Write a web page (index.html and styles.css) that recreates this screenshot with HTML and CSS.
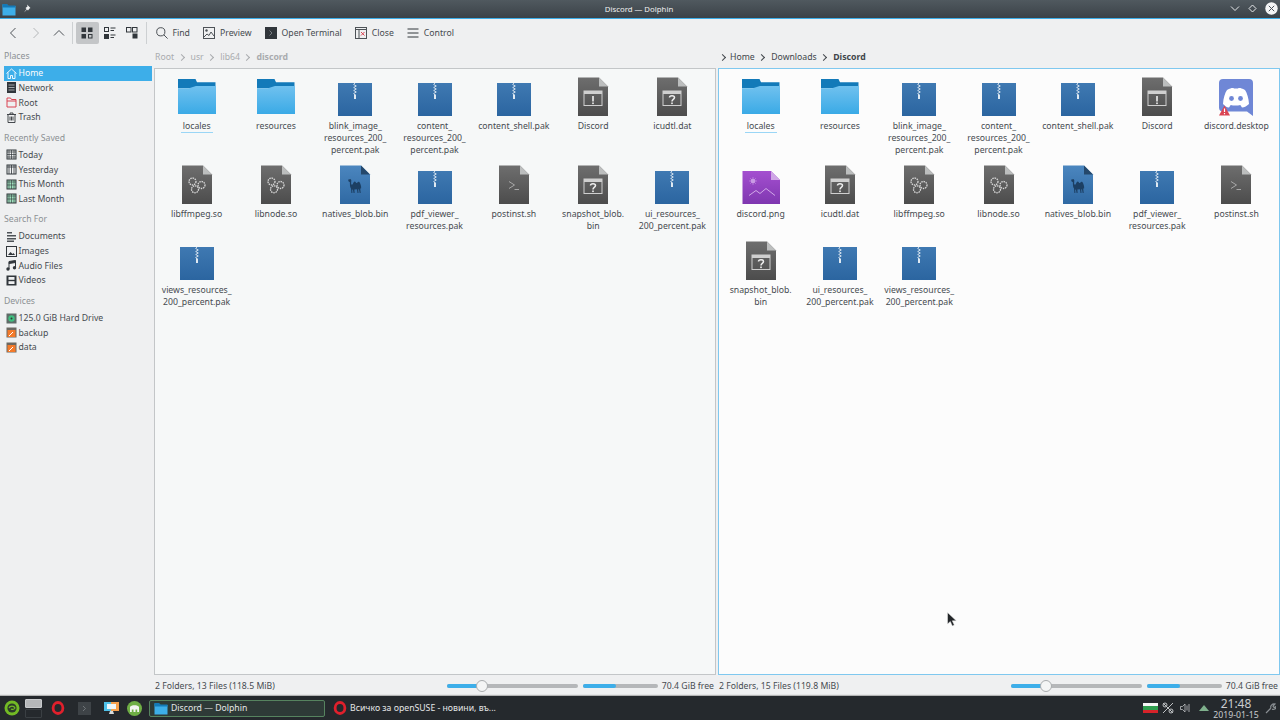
FILE: index.html
```html
<!DOCTYPE html>
<html lang="en">
<head>
    <meta charset="UTF-8">
    <meta name="viewport" content="width=device-width, initial-scale=1.0">
    <title>Discord — Dolphin</title>
    <link rel="stylesheet" href="styles.css">
</head>
<body>
    <!-- shared icons -->
    <svg class="defs" width="0" height="0">
        <defs>
            <linearGradient id="gFolder" x1="0" y1="0" x2="0" y2="1"><stop offset="0" stop-color="#70c1ef"/><stop offset="1" stop-color="#3aaae6"/></linearGradient>
            <linearGradient id="gZip" x1="0" y1="0" x2="0" y2="1"><stop offset="0" stop-color="#3f79b2"/><stop offset="1" stop-color="#2b65a0"/></linearGradient>
            <linearGradient id="gFile" x1="0" y1="0" x2="0" y2="1"><stop offset="0" stop-color="#6e6e6e"/><stop offset="1" stop-color="#4c4c4c"/></linearGradient>
            <linearGradient id="gBlue" x1="0" y1="0" x2="0" y2="1"><stop offset="0" stop-color="#4b86bf"/><stop offset="1" stop-color="#2f69a3"/></linearGradient>
            <linearGradient id="gPurple" x1="0" y1="0" x2="0" y2="1"><stop offset="0" stop-color="#a44fd0"/><stop offset="1" stop-color="#7f37b0"/></linearGradient>

            <symbol id="folder" viewBox="0 0 40 40">
                <path d="M1 2h17.500l1.500 3.300h18.500v6H1z" fill="#137ab9"/>
                <path d="M1 11.300h11l7-2.300h20v28H1z" fill="url(#gFolder)"/>
            </symbol>
            <symbol id="zip" viewBox="0 0 40 40">
                <rect x="3" y="6" width="34" height="33" fill="url(#gZip)"/>
                <path d="M20 6l-1.300 1.500 2.600 1.500-2.600 1.500 2.600 1.500-2.600 1.500 2.600 1.500-2.600 1.500 1.300 1.500" fill="none" stroke="#dfe9f2" stroke-width=".9"/>
                <rect x="19" y="17.500" width="2" height="4.500" fill="#dfe9f2"/>
            </symbol>
            <symbol id="filebase" viewBox="0 0 40 40">
                <path d="M5 .5h21l9 9v29.500H5z" fill="url(#gFile)"/>
                <path d="M26 .5l9 9h-9z" fill="#bcbebe"/>
            </symbol>
            <symbol id="file-warn" viewBox="0 0 40 40">
                <use href="#filebase"/>
                <rect x="11" y="14" width="18" height="14.500" fill="none" stroke="#cfcfcf" stroke-width="1"/>
                <rect x="11" y="14" width="18" height="3" fill="#cfcfcf"/>
                <rect x="19.200" y="19" width="1.600" height="5.500" fill="#eee"/>
                <rect x="19.200" y="25.500" width="1.600" height="1.600" fill="#eee"/>
            </symbol>
            <symbol id="file-q" viewBox="0 0 40 40">
                <use href="#filebase"/>
                <rect x="11" y="14" width="18" height="14.500" fill="none" stroke="#cfcfcf" stroke-width="1"/>
                <rect x="11" y="14" width="18" height="3" fill="#cfcfcf"/>
                <path d="M17.500 20.500c0-2.500 5-2.500 5 0 0 2-2.500 1.800-2.500 4" fill="none" stroke="#eee" stroke-width="1.500"/>
                <rect x="19.200" y="25.500" width="1.600" height="1.600" fill="#eee"/>
            </symbol>
            <symbol id="file-gears" viewBox="0 0 40 40">
                <use href="#filebase"/>
                <g fill="none" stroke="#d8d8d8" stroke-width="1.300" stroke-dasharray="1.500 .8">
                    <circle cx="15.500" cy="16.500" r="3.500"/>
                    <circle cx="24.500" cy="20" r="3.500"/>
                    <circle cx="18" cy="24.300" r="3.500"/>
                </g>
            </symbol>
            <symbol id="file-term" viewBox="0 0 40 40">
                <use href="#filebase"/>
                <path d="M15 16.500l5.500 3.500-5.500 3.500M20.500 24.500h4.500" fill="none" stroke="#a8a8a8" stroke-width="1"/>
            </symbol>
            <symbol id="file-camel" viewBox="0 0 40 40">
                <path d="M5 .5h21l9 9v29.500H5z" fill="url(#gBlue)"/>
                <path d="M26 .5l9 9h-9z" fill="#25486b"/>
                <path d="M13 14.800l2.500-.8.800 1.200-.2 3.500c.3 1.200 1.200 1.300 1.800.2.700-2.300 2-3.200 3-1.500.5.800 1 .8 1.500 0 .8-1.200 2.300-.8 2.800 1 .8 2 1.200 3.500.8 5.500l-.3-1.200-.4 1.500.4 3.800h-1l-.8-4-.7.800.3 3.200h-1l-.6-3.800-2.500.3.200 3.500h-1l-.7-3.500-.7.200.2 3.300h-1l-.4-4.500c-1.200-1.500-1-4-1.200-6.500l-1-.3z" fill="#1c3f63"/>
            </symbol>
            <symbol id="file-image" viewBox="0 0 40 40">
                <path d="M1.500 6h28.500l9 9v24H1.500z" fill="url(#gPurple)"/>
                <path d="M30 6l9 9h-9z" fill="#cfa6e6"/>
                <circle cx="12" cy="16" r="2.300" fill="#c99ae4"/>
                <path d="M12 12v8M8 16h8M9.200 13.200l5.600 5.600M14.800 13.200l-5.600 5.600" stroke="#c99ae4" stroke-width=".6"/>
                <path d="M8 30.500l7-5 4 3 6-5 9 7" fill="none" stroke="#d8b4ec" stroke-width=".9"/>
            </symbol>
            <symbol id="discord" viewBox="0 0 40 40">
                <path d="M3 6a4 4 0 0 1 4-4h26a4 4 0 0 1 4 4v33l-6-4.500H7a4 4 0 0 1-4-4z" fill="#6f87d6"/>
                <path d="M7 27c.3-6 2-11 4-14 4-2 6-2.300 7-1.500h4c1-.8 3-.5 7 1.500 2 3 3.700 8 4 14-2 2-4.500 3.300-7 3.500l-1.700-2.500c-2.700.8-6.900.8-9.600 0L13 30.500c-2.500-.2-4-1.500-6-3.500z" fill="#fff"/>
                <circle cx="15.500" cy="21.500" r="2.400" fill="#6f87d6"/>
                <circle cx="24.500" cy="21.500" r="2.400" fill="#6f87d6"/>
                <path d="M3 38.500l5.500-10 5.500 10z" fill="#da4453"/>
                <path d="M8.500 31.500v3.500M8.500 36v1.300" stroke="#fff" stroke-width="1.200"/>
            </symbol>

            <symbol id="opera" viewBox="0 0 14 14">
                <ellipse cx="7" cy="7" rx="4.900" ry="5.500" fill="none" stroke="#e0202c" stroke-width="2.800"/>
            </symbol>
            <symbol id="doc-folder" viewBox="0 0 14 14">
                <path d="M.5 2.500h4.500l1.500 1.500h7v9.500H.5z" fill="#3daee9"/>
                <path d="M.5 2h4.500l1.500 1.500h7v2h-13z" fill="#147ab8"/>
            </symbol>
        </defs>
    </svg>

    <header class="titlebar">
        <div class="title-left">
            <svg class="ti-folder" width="14" height="14"><use href="#doc-folder"/></svg>
            <svg width="9" height="9" viewBox="0 0 9 9"><path d="M5 .5l3.500 3.500-1 .5-1.500 2-1-1-3 3 2.500-3.500-1-1 2-1.500z" fill="#f2f3f4"/></svg>
        </div>
        <div class="title-text">Discord — Dolphin</div>
        <div class="title-right">
            <svg width="10" height="6" viewBox="0 0 10 6"><path d="M1 .5l4 4 4-4" fill="none" stroke="#e8eaec" stroke-width="1"/></svg>
            <svg width="9" height="9" viewBox="0 0 9 9"><path d="M4.500 1l3.500 3.500-3.500 3.500-3.500-3.500z" fill="none" stroke="#e8eaec" stroke-width="1"/></svg>
            <svg width="13" height="13" viewBox="0 0 13 13"><circle cx="6.500" cy="6.500" r="6.200" fill="#f4f5f6"/><path d="M3.800 3.800l5.400 5.400M9.200 3.800l-5.400 5.400" stroke="#4a5158" stroke-width="1"/></svg>
        </div>
    </header>

    <nav class="toolbar">
        <div class="tool-group nav-group">
            <button class="nav-btn"><svg width="10" height="12" viewBox="0 0 10 12"><path d="M7.500 1l-5 5 5 5" fill="none" stroke="#4d5257" stroke-width="1"/></svg></button>
            <button class="nav-btn"><svg width="10" height="12" viewBox="0 0 10 12"><path d="M2.500 1l5 5-5 5" fill="none" stroke="#b4b7b9" stroke-width="1"/></svg></button>
            <button class="nav-btn"><svg width="12" height="10" viewBox="0 0 12 10"><path d="M1 7.500l5-5 5 5" fill="none" stroke="#4d5257" stroke-width="1"/></svg></button>
        </div>
        <div class="tool-sep"></div>
        <div class="tool-group view-group">
            <button class="view-btn active"><svg width="12" height="12" viewBox="0 0 12 12"><path d="M.5.500h4.500v4.500h-4.500zM7 .5h4.500v4.500h-4.500zM.5 7h4.500v4.500h-4.500z" fill="#31363b"/><rect x="7.500" y="7.500" width="3.500" height="3.500" fill="none" stroke="#31363b"/></svg></button>
            <button class="view-btn"><svg width="12" height="12" viewBox="0 0 12 12"><rect x=".5" y=".5" width="4" height="4" fill="none" stroke="#31363b"/><rect y="7" width="5" height="5" fill="#31363b"/><path d="M6.500 1h5M6.500 3.500h3.500M6.500 8h5M6.500 10.500h3.500" stroke="#31363b"/></svg></button>
            <button class="view-btn"><svg width="12" height="12" viewBox="0 0 12 12"><rect x=".5" y=".5" width="4.500" height="4.500" fill="none" stroke="#31363b"/><rect x="6.500" y=".5" width="4.500" height="4.500" fill="none" stroke="#31363b"/><rect x="6.500" y="6.500" width="5" height="5" fill="#31363b"/></svg></button>
        </div>
        <div class="tool-sep"></div>
        <div class="tool-group action-group">
            <div class="action"><svg width="12" height="12" viewBox="0 0 12 12"><circle cx="4.800" cy="4.800" r="4.100" fill="none" stroke="#4d5257"/><path d="M7.800 7.800l3.800 3.800" stroke="#4d5257"/></svg>Find</div>
            <div class="action"><svg width="12" height="12" viewBox="0 0 12 12"><rect x=".5" y=".5" width="11" height="11" fill="none" stroke="#4d5257"/><circle cx="3.500" cy="3.500" r="1.200" fill="#4d5257"/><path d="M1 10l3-3 2 1.500 2-3.500 3 4" fill="none" stroke="#4d5257"/></svg>Preview</div>
            <div class="action"><svg width="12" height="12" viewBox="0 0 12 12"><rect width="12" height="12" fill="#31363b"/><path d="M4.500 3.500l2.500 2.500-2.500 2.500" fill="none" stroke="#8c9196" stroke-width=".8"/></svg>Open Terminal</div>
            <div class="action"><svg width="12" height="12" viewBox="0 0 12 12"><rect x=".5" y=".5" width="11" height="11" fill="none" stroke="#4d5257"/><path d="M.5 2.500h11M4 2.500v9" stroke="#4d5257"/><path d="M6 5l3.500 3.500M9.500 5L6 8.500" stroke="#da4453"/></svg>Close</div>
            <div class="action"><svg width="12" height="12" viewBox="0 0 12 12"><path d="M.5 2h11M.5 6h11M.5 10h11" stroke="#31363b" stroke-width="1"/></svg>Control</div>
        </div>
    </nav>

    <main class="main">
        <aside class="sidebar">
            <section class="side-section">
                <h4>Places</h4>
                <div class="side-item selected"><svg width="11" height="11" viewBox="0 0 11 11"><path d="M.5 5.500l5-4.500 5 4.500M2 4.500v6h2.500v-3h2v3h2.500v-6" fill="none" stroke="#fff" stroke-width=".9"/></svg>Home</div>
                <div class="side-item"><svg width="11" height="11" viewBox="0 0 11 11"><rect x="1" y="0" width="9" height="11" fill="#31363b"/><path d="M2.500 3h6M2.500 5.500h6M2.500 8h6" stroke="#bfc2c4" stroke-width=".8"/></svg>Network</div>
                <div class="side-item"><svg width="11" height="11" viewBox="0 0 11 11"><path d="M1 1h3.500l1 1.500h4.500v7.500h-9z" fill="none" stroke="#da4453"/><path d="M1 4h9" stroke="#da4453"/></svg>Root</div>
                <div class="side-item"><svg width="11" height="11" viewBox="0 0 11 11"><path d="M1 2.500h9M4 2.500v-1.500h3v1.500M2 2.500v8h7v-8M4 4.500v4M5.500 4.500v4M7 4.500v4" fill="none" stroke="#31363b" stroke-width=".9"/></svg>Trash</div>
            </section>
            <section class="side-section">
                <h4>Recently Saved</h4>
                <div class="side-item"><svg width="11" height="11" viewBox="0 0 11 11"><rect x="1" y="1" width="9" height="9" fill="none" stroke="#31363b"/><path d="M1 3h9M3 1v9M5.500 1v9M8 1v9M1 5.500h9M1 8h9" stroke="#31363b" stroke-width=".7"/></svg>Today</div>
                <div class="side-item"><svg width="11" height="11" viewBox="0 0 11 11"><rect x="1" y="1" width="9" height="9" fill="none" stroke="#31363b"/><path d="M1 3h9M3 1v9M5.500 1v9M8 1v9" stroke="#31363b" stroke-width=".8"/></svg>Yesterday</div>
                <div class="side-item"><svg width="11" height="11" viewBox="0 0 11 11"><rect x="1" y="1" width="9" height="9" fill="#9fe0bd" stroke="#31363b"/><path d="M1 3h9M3 1v9M5.500 1v9M8 1v9M1 6h9" stroke="#31363b" stroke-width=".6"/></svg>This Month</div>
                <div class="side-item"><svg width="11" height="11" viewBox="0 0 11 11"><rect x="1" y="1" width="9" height="9" fill="#9fe0bd" stroke="#31363b"/><path d="M1 3h9M3 1v9M5.500 1v9M8 1v9M1 6h9" stroke="#31363b" stroke-width=".6"/></svg>Last Month</div>
            </section>
            <section class="side-section">
                <h4>Search For</h4>
                <div class="side-item"><svg width="11" height="11" viewBox="0 0 11 11"><path d="M1 1h5v1.500H1zM1 4h9v1.500H1zM1 7h9v1.500H1zM1 9.500h7V11H1z" fill="#4d5257"/></svg>Documents</div>
                <div class="side-item"><svg width="11" height="11" viewBox="0 0 11 11"><rect x=".5" y=".5" width="10" height="10" fill="none" stroke="#31363b"/><path d="M2 9l2.500-3 2 2 1-1 1.500 2z" fill="#31363b"/></svg>Images</div>
                <div class="side-item"><svg width="11" height="11" viewBox="0 0 11 11"><path d="M3 2.500v6.500M9.500 1v6.500M3 1.500l6.500-1v2l-6.500 1z" fill="#31363b" stroke="#31363b"/><circle cx="2" cy="9" r="1.700" fill="#31363b"/><circle cx="8.500" cy="7.800" r="1.700" fill="#31363b"/></svg>Audio Files</div>
                <div class="side-item"><svg width="11" height="11" viewBox="0 0 11 11"><rect x=".5" y=".5" width="10" height="10" fill="#31363b"/><rect x="2.500" y="2" width="6" height="2.800" fill="#eff0f1"/><rect x="2.500" y="6.200" width="6" height="2.800" fill="#eff0f1"/></svg>Videos</div>
            </section>
            <section class="side-section">
                <h4>Devices</h4>
                <div class="side-item"><svg width="11" height="11" viewBox="0 0 11 11"><rect x=".5" y=".5" width="10" height="10" fill="#5f6b68"/><circle cx="5.500" cy="5.500" r="3.200" fill="#3fbf7f"/><circle cx="5.500" cy="5.500" r="1" fill="#2c3a36"/></svg>125.0 GiB Hard Drive</div>
                <div class="side-item"><svg width="11" height="11" viewBox="0 0 11 11"><rect x=".5" y=".5" width="10" height="10" fill="#6c6862"/><rect x="1.500" y="3" width="8" height="7" fill="#f47a2a"/><path d="M3 9l4-4" stroke="#fff"/></svg>backup</div>
                <div class="side-item"><svg width="11" height="11" viewBox="0 0 11 11"><rect x=".5" y=".5" width="10" height="10" fill="#6c6862"/><rect x="1.500" y="3" width="8" height="7" fill="#f47a2a"/><path d="M3 9l4-4" stroke="#fff"/></svg>data</div>
            </section>
        </aside>

        <section class="pane inactive">
            <div class="crumbs">
                <span>Root</span><i class="crumb-arrow"></i><span>usr</span><i class="crumb-arrow"></i><span>lib64</span><i class="crumb-arrow"></i><b>discord</b>
            </div>
            <div class="files">
                <div class="file"><svg class="file-icon"><use href="#folder"/></svg><div class="file-name"><span class="hover-line">locales</span></div></div>
                <div class="file"><svg class="file-icon"><use href="#folder"/></svg><div class="file-name">resources</div></div>
                <div class="file"><svg class="file-icon"><use href="#zip"/></svg><div class="file-name">blink_image_<br>resources_200_<br>percent.pak</div></div>
                <div class="file"><svg class="file-icon"><use href="#zip"/></svg><div class="file-name">content_<br>resources_200_<br>percent.pak</div></div>
                <div class="file"><svg class="file-icon"><use href="#zip"/></svg><div class="file-name">content_shell.pak</div></div>
                <div class="file"><svg class="file-icon"><use href="#file-warn"/></svg><div class="file-name">Discord</div></div>
                <div class="file"><svg class="file-icon"><use href="#file-q"/></svg><div class="file-name">icudtl.dat</div></div>
                <div class="file"><svg class="file-icon"><use href="#file-gears"/></svg><div class="file-name">libffmpeg.so</div></div>
                <div class="file"><svg class="file-icon"><use href="#file-gears"/></svg><div class="file-name">libnode.so</div></div>
                <div class="file"><svg class="file-icon"><use href="#file-camel"/></svg><div class="file-name">natives_blob.bin</div></div>
                <div class="file"><svg class="file-icon"><use href="#zip"/></svg><div class="file-name">pdf_viewer_<br>resources.pak</div></div>
                <div class="file"><svg class="file-icon"><use href="#file-term"/></svg><div class="file-name">postinst.sh</div></div>
                <div class="file"><svg class="file-icon"><use href="#file-q"/></svg><div class="file-name">snapshot_blob.<br>bin</div></div>
                <div class="file"><svg class="file-icon"><use href="#zip"/></svg><div class="file-name">ui_resources_<br>200_percent.pak</div></div>
                <div class="file"><svg class="file-icon"><use href="#zip"/></svg><div class="file-name">views_resources_<br>200_percent.pak</div></div>
            </div>
            <div class="status">
                <span>2 Folders, 13 Files (118.5 MiB)</span>
                <div class="status-right">
                    <div class="zoom-slider"><div class="slider-fill"></div><div class="slider-handle"></div></div>
                    <div class="capacity"><div class="capacity-fill"></div></div>
                    <span>70.4 GiB free</span>
                </div>
            </div>
        </section>

        <section class="pane">
            <div class="crumbs right-crumbs">
                <i class="crumb-arrow first"></i><span>Home</span><i class="crumb-arrow"></i><span>Downloads</span><i class="crumb-arrow"></i><b>Discord</b>
            </div>
            <div class="files">
                <div class="file"><svg class="file-icon"><use href="#folder"/></svg><div class="file-name"><span class="hover-line">locales</span></div></div>
                <div class="file"><svg class="file-icon"><use href="#folder"/></svg><div class="file-name">resources</div></div>
                <div class="file"><svg class="file-icon"><use href="#zip"/></svg><div class="file-name">blink_image_<br>resources_200_<br>percent.pak</div></div>
                <div class="file"><svg class="file-icon"><use href="#zip"/></svg><div class="file-name">content_<br>resources_200_<br>percent.pak</div></div>
                <div class="file"><svg class="file-icon"><use href="#zip"/></svg><div class="file-name">content_shell.pak</div></div>
                <div class="file"><svg class="file-icon"><use href="#file-warn"/></svg><div class="file-name">Discord</div></div>
                <div class="file"><svg class="file-icon"><use href="#discord"/></svg><div class="file-name">discord.desktop</div></div>
                <div class="file"><svg class="file-icon"><use href="#file-image"/></svg><div class="file-name">discord.png</div></div>
                <div class="file"><svg class="file-icon"><use href="#file-q"/></svg><div class="file-name">icudtl.dat</div></div>
                <div class="file"><svg class="file-icon"><use href="#file-gears"/></svg><div class="file-name">libffmpeg.so</div></div>
                <div class="file"><svg class="file-icon"><use href="#file-gears"/></svg><div class="file-name">libnode.so</div></div>
                <div class="file"><svg class="file-icon"><use href="#file-camel"/></svg><div class="file-name">natives_blob.bin</div></div>
                <div class="file"><svg class="file-icon"><use href="#zip"/></svg><div class="file-name">pdf_viewer_<br>resources.pak</div></div>
                <div class="file"><svg class="file-icon"><use href="#file-term"/></svg><div class="file-name">postinst.sh</div></div>
                <div class="file"><svg class="file-icon"><use href="#file-q"/></svg><div class="file-name">snapshot_blob.<br>bin</div></div>
                <div class="file"><svg class="file-icon"><use href="#zip"/></svg><div class="file-name">ui_resources_<br>200_percent.pak</div></div>
                <div class="file"><svg class="file-icon"><use href="#zip"/></svg><div class="file-name">views_resources_<br>200_percent.pak</div></div>
                <svg class="cursor" width="10" height="15" viewBox="0 0 10 15"><path d="M.5.500v11.500l2.800-2.500 2 4.500 2-1-2-4.200h4z" fill="#232629" stroke="#eee" stroke-width=".5"/></svg>
            </div>
            <div class="status">
                <span>2 Folders, 15 Files (119.8 MiB)</span>
                <div class="status-right">
                    <div class="zoom-slider"><div class="slider-fill"></div><div class="slider-handle"></div></div>
                    <div class="capacity"><div class="capacity-fill"></div></div>
                    <span>70.4 GiB free</span>
                </div>
            </div>
        </section>
    </main>

    <footer class="panel">
        <div class="launchers">
            <svg class="suse" width="16" height="16" viewBox="0 0 16 16"><circle cx="8" cy="8" r="7.500" fill="#73ba25"/><circle cx="8" cy="8" r="4.600" fill="#2c3a2a"/><path d="M5 8c1-2.500 5-2.500 6 0-1 1.500-2.500 1.800-4 1" fill="none" stroke="#73ba25" stroke-width="1.200"/></svg>
            <div class="pager"><div class="desk on"></div><div class="desk"></div></div>
            <svg class="lnch-opera" width="14" height="14"><use href="#opera"/></svg>
            <svg class="lnch-term" width="13" height="13" viewBox="0 0 13 13"><rect width="13" height="13" fill="#3e4347"/><path d="M5 4l2.500 2.500L5 9" fill="none" stroke="#7c8185" stroke-width=".8"/></svg>
            <svg class="lnch-screen" width="15" height="14" viewBox="0 0 15 14"><rect x="0" y="1" width="15" height="9" fill="#4fc1e9"/><path d="M7 1h8v9H7z" fill="#f6a04d"/><rect x="3" y="3" width="9" height="5" fill="#eef6fa"/><path d="M5 13h5l-1-3H6z" fill="#d8dbdd"/></svg>
            <svg class="lnch-pg" width="15" height="15" viewBox="0 0 15 15"><circle cx="7.500" cy="7.500" r="7.500" fill="#6fae45"/><path d="M3 11V6c1-2.500 8-2.500 9 0v5h-1.800V8.500H8.500V11H6.500V8.500H4.800V11z" fill="#f2f4f0"/></svg>
        </div>
        <div class="task active"><svg width="14" height="14"><use href="#doc-folder"/></svg>Discord — Dolphin</div>
        <div class="task"><svg width="14" height="14"><use href="#opera"/></svg>Всичко за openSUSE - новини, въ...</div>
        <div class="tray">
            <div class="flag"><div></div><div></div><div></div></div>
            <svg class="tray-net" width="12" height="12" viewBox="0 0 12 12"><path d="M1 1l10 10M11 1L1 11" stroke="#bfc2c4" stroke-width="1"/><circle cx="3" cy="3" r="2" fill="none" stroke="#bfc2c4"/><circle cx="9" cy="9" r="2" fill="none" stroke="#bfc2c4"/></svg>
            <svg class="tray-vol" width="10" height="10" viewBox="0 0 10 10"><path d="M.5 3.500h2l2.500-2.500v8l-2.500-2.500h-2z" fill="none" stroke="#bfc2c4" stroke-width=".8"/><path d="M7 2.500v5M9 1v8" stroke="#bfc2c4" stroke-width=".8"/></svg>
            <svg class="tray-up" width="10" height="6" viewBox="0 0 10 6"><path d="M5 0l5 6H0z" fill="#7fb08c"/></svg>
            <div class="clock"><div class="clock-time">21:48</div><div class="clock-date">2019-01-15</div></div>
            <svg class="tray-tool" width="11" height="11" viewBox="0 0 11 11"><path d="M1 10l5-5M6 5c-1-2 1-4.500 4-4l-2 2 .5 1 1 .5 2-1.500c0 3-3 4-4.500 3" fill="none" stroke="#8a8f93" stroke-width="1.200"/></svg>
        </div>
    </footer>
</body>
</html>
```
FILE: styles.css
```css
* {
    box-sizing: border-box;
}

html,
body {
    height: 100%;
}

body {
    margin: 0;
    display: flex;
    flex-direction: column;
    height: 720px;
    overflow: hidden;
    font-family: "Noto Sans", sans-serif;
    font-size: 8.7px;
    line-height: 12px;
    color: #464b50;
    background: #eff0f1;
}

svg {
    flex: none;
    display: block;
}

.defs {
    position: absolute;
}

/* Window title */
.titlebar {
    flex: none;
    height: 19px;
    display: flex;
    align-items: center;
    justify-content: space-between;
    padding: 0 2px 1px;
    font-size: 7.800px;
    color: #eff0f1;
    background: linear-gradient(#50595f, #3b4248);
    border-bottom: 1px solid #3daee9;
}

.title-left,
.title-right {
    display: flex;
    align-items: center;
    width: 200px;
}

.title-left {
    gap: 6px;
}

.title-right {
    justify-content: flex-end;
    gap: 8px;
}

.title-text {
    margin-left: -2px;
}

/* Toolbar */
.toolbar {
    flex: none;
    height: 27px;
    display: flex;
    align-items: center;
    padding-left: 1px;
}

.tool-group {
    display: flex;
    align-items: center;
}

.nav-btn,
.view-btn {
    display: flex;
    align-items: center;
    justify-content: center;
    padding: 0;
    border: 0;
    background: none;
    border-radius: 2px;
}

.nav-btn {
    width: 23px;
    height: 22px;
}

.view-btn {
    width: 22.500px;
    height: 22px;
}

.view-btn.active {
    background: #c4c6c8;
}

.tool-sep {
    width: 1px;
    height: 22px;
    margin: 0 3px 0 2px;
    background: #cdd0d2;
}

.action-group {
    gap: 13px;
    margin-left: 6px;
}

.action {
    display: flex;
    align-items: center;
    gap: 5px;
}

/* Main split */
.main {
    flex: 1;
    min-height: 0;
    display: flex;
}

.sidebar {
    flex: none;
    width: 154px;
    padding: 4px 2px 0 4px;
}

.side-section {
    margin-bottom: 7px;
}

.side-section h4 {
    margin: 0 0 4px;
    font-weight: normal;
    font-size: inherit;
    color: #8c9094;
}

.side-item {
    height: 14.650px;
    display: flex;
    align-items: center;
    gap: 1.500px;
    padding-left: 2px;
}

.side-item.selected {
    color: #fcfcfc;
    background: #3daee9;
}

/* Split view panes */
.pane {
    flex: 1;
    min-width: 0;
    display: flex;
    flex-direction: column;
}

.pane + .pane {
    margin-left: 2px;
}

.crumbs {
    flex: none;
    height: 22px;
    display: flex;
    align-items: center;
    padding: 0 0 0 1px;
    color: #41464b;
}

.crumbs b {
    font-weight: bold;
}

.inactive .crumbs {
    color: #a9abae;
}

.crumb-arrow {
    width: 5px;
    height: 5px;
    margin: 0 7px 0 4.500px;
    border-top: 1px solid currentColor;
    border-right: 1px solid currentColor;
    transform: rotate(45deg);
}

.crumb-arrow.first {
    margin-left: 0;
    margin-right: 5px;
}

.right-crumbs {
    padding-left: 2px;
}

.files {
    position: relative;
    flex: 1;
    min-height: 0;
    display: grid;
    grid-template-columns: repeat(7, 79.300px);
    grid-auto-rows: max-content;
    padding: 8px 2px 0;
    background: #fcfcfc;
    border: 1px solid #7fc8ef;
}

.inactive .files {
    background: #f6f8f8;
    border-color: #c3c6c8;
}

.file {
    display: flex;
    flex-direction: column;
    align-items: center;
    padding-bottom: 9px;
}

.file-icon {
    width: 40px;
    height: 40px;
    margin-bottom: 3px;
}

.file-name {
    text-align: center;
    white-space: nowrap;
}

.hover-line {
    display: inline-block;
    padding: 0 2px;
    box-shadow: 0 1px 0 #9ad6f6;
}

.cursor {
    position: absolute;
    left: 228px;
    top: 543px;
}

/* Status bar */
.status {
    flex: none;
    height: 21px;
    display: flex;
    align-items: center;
    justify-content: space-between;
    padding: 0 2px 0 1px;
}

.status-right {
    display: flex;
    align-items: center;
}

.zoom-slider {
    position: relative;
    width: 131px;
    height: 4px;
    margin-right: 5px;
    border-radius: 2px;
    background: #b5b7b9;
}

.slider-fill {
    width: 35px;
    height: 100%;
    border-radius: 2px;
    background: #3daee9;
}

.slider-handle {
    position: absolute;
    left: 29px;
    top: -4px;
    width: 12px;
    height: 12px;
    border-radius: 50%;
    border: 1px solid #a9acae;
    background: #f4f5f5;
}

.capacity {
    width: 75px;
    height: 4px;
    margin-right: 4px;
    border-radius: 2px;
    background: #b5b7b9;
}

.capacity-fill {
    width: 44%;
    height: 100%;
    border-radius: 2px;
    background: #3daee9;
}

/* Desktop panel */
.panel {
    flex: none;
    height: 24px;
    display: flex;
    align-items: center;
    color: #e4e6e7;
    background: #25292d;
    box-shadow: 0 -1px 1px rgba(0, 0, 0, 0.25);
}

.launchers {
    width: 149px;
    display: flex;
    align-items: center;
    padding-left: 4px;
}

.pager {
    width: 17px;
    margin-left: 5px;
}

.desk {
    height: 9px;
    border: 1px solid #3a3f43;
    border-radius: 1px;
}

.desk.on {
    margin-bottom: 1px;
    background: #b5b7b9;
    border-color: #c8cacc;
}

.lnch-opera {
    margin-left: 9px;
}

.lnch-term {
    margin-left: 13px;
}

.lnch-screen {
    margin-left: 13px;
}

.lnch-pg {
    margin-left: 8px;
}

.task {
    display: flex;
    align-items: center;
    gap: 3px;
    height: 17px;
    padding-left: 4px;
}

.task.active {
    width: 176px;
    margin-right: 4px;
    border: 1px solid #56835f;
    border-radius: 2px;
    background: #2e3a37;
}

.tray {
    margin-left: auto;
    display: flex;
    align-items: center;
}

.flag {
    width: 15px;
    height: 10px;
    margin-right: 4px;
}

.flag div {
    height: 33.33%;
    background: #f6f6f6;
}

.flag div:nth-child(2) {
    background: #2f9e4f;
}

.flag div:nth-child(3) {
    background: #d6232a;
}

.tray-vol {
    margin-left: 6px;
}

.tray-up {
    margin-left: 9px;
}

.clock {
    width: 50px;
    margin-left: 2px;
    text-align: center;
    color: #c9cccd;
}

.clock-time {
    font-size: 12px;
    line-height: 14px;
}

.clock-date {
    font-size: 8.700px;
    line-height: 9px;
}

.tray-tool {
    margin: 0 4px 0 4px;
}
```
